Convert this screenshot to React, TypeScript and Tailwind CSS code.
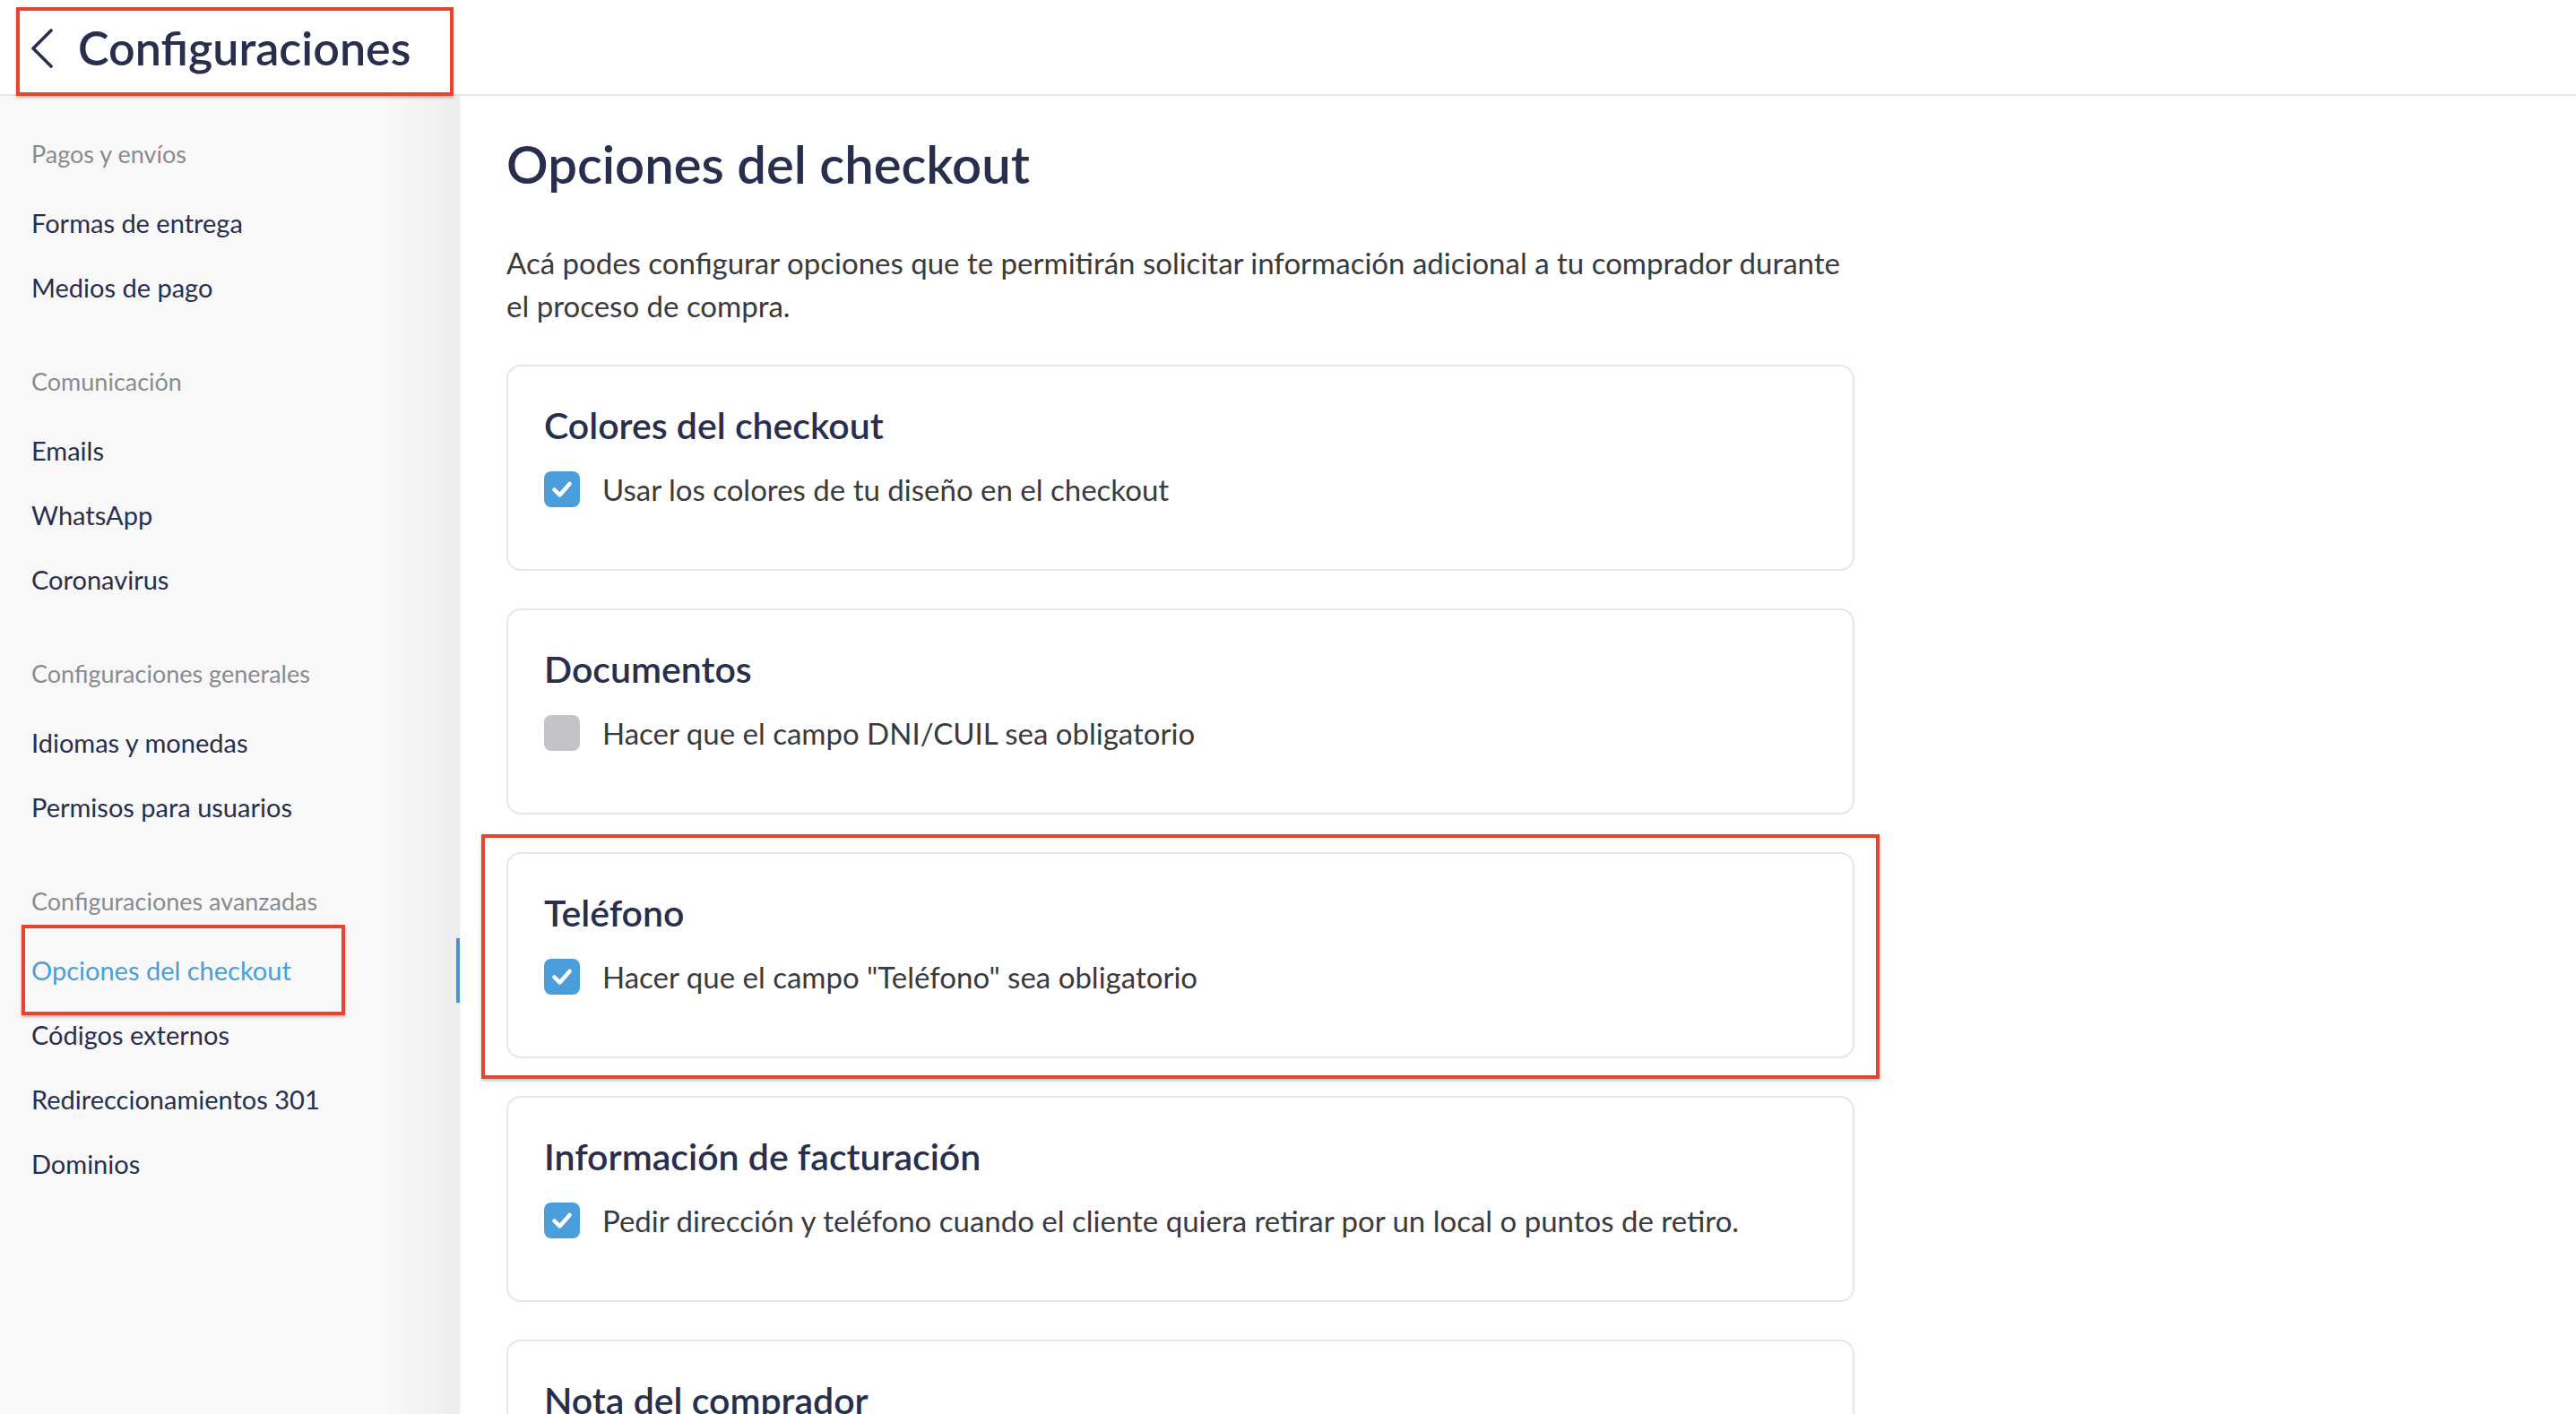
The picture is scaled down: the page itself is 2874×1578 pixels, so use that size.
import React from "react";

const NAVY = "text-[#282f4e]";

function CheckBox({ checked }: { checked: boolean }) {
  return (
    <div
      className={`w-[40px] h-[40px] rounded-[8px] flex items-center justify-center shrink-0 ${
        checked ? "bg-[#4a9edc]" : "bg-[#c4c4c6]"
      }`}
    >
      {checked && (
        <svg width="40" height="40" viewBox="0 0 40 40" fill="none">
          <path d="M11.5 20.5 L17.5 26.5 L28.5 14" stroke="white" strokeWidth="4.5" strokeLinecap="round" strokeLinejoin="round" />
        </svg>
      )}
    </div>
  );
}

function Card({ title, label, checked, highlight }: { title: string; label: string; checked: boolean; highlight?: boolean }) {
  return (
    <div className="relative shrink-0">
      <div className="h-[230px] rounded-[16px] border-2 border-[#e6e6e6] bg-white px-[40px] pt-[40px]">
        <div className={`text-[41px] leading-[52px] font-semibold ${NAVY}`}>{title}</div>
        <div className="mt-[25px] flex items-center gap-[25px]">
          <CheckBox checked={checked} />
          <span className="text-[33px] leading-[40px] text-[#3a3a3c]">{label}</span>
        </div>
      </div>
      {highlight && (
        <div className="absolute -left-[28px] -right-[28px] -top-[20px] -bottom-[23px] border-[4px] border-[#e8432d] shadow-[0_2px_3px_rgba(0,0,0,0.25)] pointer-events-none" />
      )}
    </div>
  );
}

function NavLabel({ children }: { children: React.ReactNode }) {
  return <div className="h-[40px] flex items-center text-[27px] text-[#8b8b8d]">{children}</div>;
}

function NavItem({ children, active }: { children: React.ReactNode; active?: boolean }) {
  if (active) {
    return (
      <div className="relative h-[72px] flex items-center border-r-[4px] border-[#4a90d9]">
        <span className="text-[29px] text-[#4a9edc]">{children}</span>
        <div className="absolute -left-[11px] w-[361px] -top-[15px] -bottom-[14px] border-[4px] border-[#e8432d] shadow-[0_2px_3px_rgba(0,0,0,0.25)] pointer-events-none" />
      </div>
    );
  }
  return (
    <div className="h-[72px] flex items-center">
      <span className={`text-[29px] ${NAVY}`}>{children}</span>
    </div>
  );
}

export default function App() {
  return (
    <div
      className="w-[2874px] h-[1578px] overflow-hidden bg-white flex flex-col"
      style={{ fontFamily: "Lato, 'Noto Sans', sans-serif" }}
    >
      {/* Header */}
      <div className="h-[107px] shrink-0 border-b-2 border-[#e6e6e6] bg-white pl-[18px] pt-[8px] relative z-10">
        <div className="w-[488px] h-[99px] border-[4px] border-[#e8432d] shadow-[0_2px_3px_rgba(0,0,0,0.25)] flex items-center pl-[10px] pb-[8px] gap-[25px] bg-white">
          <svg width="30" height="44" viewBox="0 0 30 44" fill="none">
            <path d="M25 2 L5 22 L25 42" stroke="#282f4e" strokeWidth="3.6" strokeLinecap="round" strokeLinejoin="round" />
          </svg>
          <span className={`text-[52px] font-semibold leading-none ${NAVY} -mt-[2px]`}>Configuraciones</span>
        </div>
      </div>

      <div className="flex flex-1 min-h-0">
        {/* Sidebar */}
        <div className="w-[513px] shrink-0 bg-[linear-gradient(to_right,#f8f8f8_84%,#ededed)] pl-[35px] pt-[45px] flex flex-col gap-[49px]">
          <div className="flex flex-col">
            <NavLabel>Pagos y envíos</NavLabel>
            <div className="h-[21px]" />
            <NavItem>Formas de entrega</NavItem>
            <NavItem>Medios de pago</NavItem>
          </div>
          <div className="flex flex-col">
            <NavLabel>Comunicación</NavLabel>
            <div className="h-[21px]" />
            <NavItem>Emails</NavItem>
            <NavItem>WhatsApp</NavItem>
            <NavItem>Coronavirus</NavItem>
          </div>
          <div className="flex flex-col">
            <NavLabel>Configuraciones generales</NavLabel>
            <div className="h-[21px]" />
            <NavItem>Idiomas y monedas</NavItem>
            <NavItem>Permisos para usuarios</NavItem>
          </div>
          <div className="flex flex-col">
            <NavLabel>Configuraciones avanzadas</NavLabel>
            <div className="h-[21px]" />
            <NavItem active>Opciones del checkout</NavItem>
            <NavItem>Códigos externos</NavItem>
            <NavItem>Redireccionamientos 301</NavItem>
            <NavItem>Dominios</NavItem>
          </div>
        </div>

        {/* Main */}
        <div className="flex-1 pl-[52px] pt-[43px]">
          <div className="w-[1504px] flex flex-col">
            <h1 className={`text-[58px] leading-[66px] font-semibold ${NAVY}`}>Opciones del checkout</h1>
            <p className="mt-[53px] text-[33px] leading-[48px] text-[#3a3a3c]">
              Acá podes configurar opciones que te permitirán solicitar información adicional a tu comprador durante el proceso de compra.
            </p>
            <div className="mt-[42px] flex flex-col gap-[42px]">
              <Card title="Colores del checkout" label="Usar los colores de tu diseño en el checkout" checked />
              <Card title="Documentos" label="Hacer que el campo DNI/CUIL sea obligatorio" checked={false} />
              <Card title="Teléfono" label={'Hacer que el campo "Teléfono" sea obligatorio'} checked highlight />
              <Card title="Información de facturación" label="Pedir dirección y teléfono cuando el cliente quiera retirar por un local o puntos de retiro." checked />
              <Card title="Nota del comprador" label="Permitir que el comprador deje una nota" checked />
            </div>
          </div>
        </div>
      </div>
    </div>
  );
}
